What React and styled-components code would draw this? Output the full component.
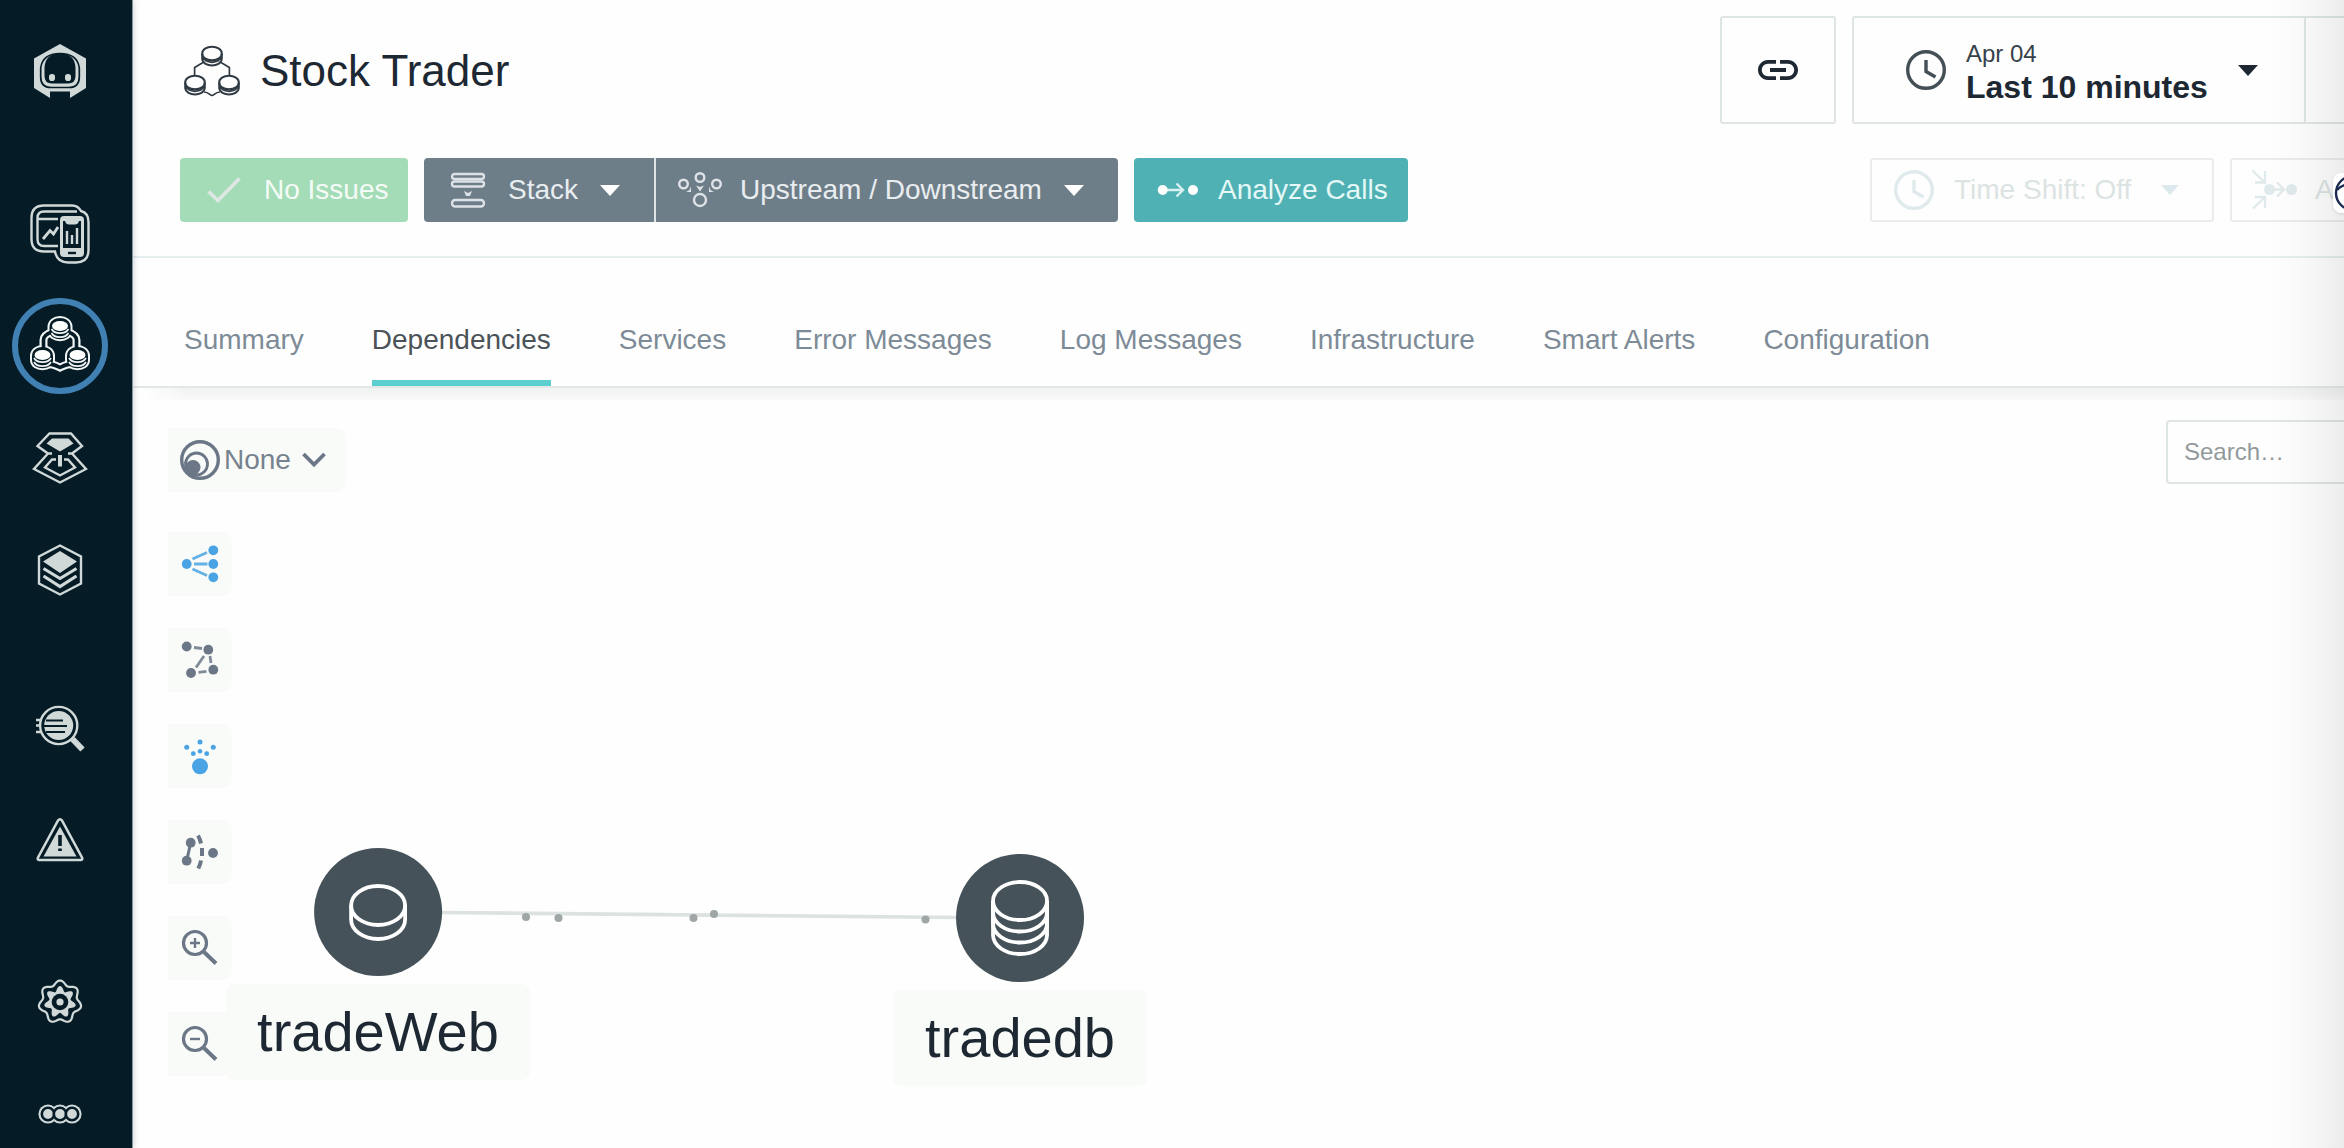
import React from 'react';
import styled, { createGlobalStyle } from 'styled-components';

const Global = createGlobalStyle`
  *, *::before, *::after { box-sizing: border-box; }
  html, body { margin: 0; padding: 0; overflow: hidden; }
  body { font-family: "Liberation Sans", Arial, sans-serif; background: #fefefe; }
  svg { display: block; flex-shrink: 0; overflow: visible; }
`;

const INK = '#1d2833';
const LIGHT = '#d0d8d8';
const NAVY = '#051c27';
const SLATE = '#6b7787';
const BLUE = '#4aa3e3';

const Shell = styled.div`
  position: relative;
  display: flex;
  width: 2344px;
  height: 1148px;
  overflow: hidden;
`;

const Sidebar = styled.nav`
  flex: none;
  width: 133px;
  display: flex;
  flex-direction: column;
  background: ${NAVY};
  border-right: 1px solid #87949a;
  box-shadow: 1px 0 6px rgba(40, 60, 80, 0.2);
  z-index: 2;
`;

const LogoSlot = styled.div`
  width: 120px;
  height: 178px;
  padding-top: 31px;
  display: flex;
  justify-content: center;
  align-items: flex-start;
  flex: none;
`;

const NavGroup = styled.div`
  margin-bottom: 48px;
  flex: none;
`;

const NavItem = styled.div`
  width: 120px;
  height: 112px;
  display: flex;
  align-items: center;
  justify-content: center;
`;

const NavRing = styled.div`
  width: 96px;
  height: 96px;
  flex: none;
  display: flex;
  align-items: center;
  justify-content: center;
  border-radius: 50%;
  border: 6px solid ${(p) => (p.$active ? '#4080b2' : 'transparent')};
`;

const Main = styled.main`
  flex: 1;
  min-width: 0;
  display: flex;
  flex-direction: column;
`;

const Header = styled.header`
  flex: none;
  height: 258px;
  border-bottom: 2px solid #e5edef;
  padding: 16px 0 0 47px;
`;

const TitleRow = styled.div`
  display: flex;
  justify-content: space-between;
  height: 108px;
`;

const TitleBlock = styled.div`
  display: flex;
  align-items: center;
  padding: 2px 0 0 4px;
`;

const Title = styled.h1`
  margin: 0 0 0 20px;
  font-size: 44px;
  font-weight: 400;
  line-height: 52px;
  color: ${INK};
`;

const TimeControls = styled.div`
  width: 624px;
  display: flex;
  gap: 16px;
  overflow: hidden;
`;

const LinkButton = styled.div`
  flex: none;
  width: 116px;
  border: 2px solid #dfe5e5;
  border-radius: 3px;
  display: flex;
  align-items: center;
  justify-content: center;
`;

const TimePicker = styled.div`
  flex: none;
  width: 600px;
  display: flex;
  border: 2px solid #dfe5e5;
  border-radius: 3px;
`;

const TimeValue = styled.div`
  width: 452px;
  border-right: 2px solid #dfe5e5;
  display: flex;
  align-items: center;
  padding-left: 52px;
`;

const TimeText = styled.div`
  margin-left: 20px;
  padding-top: 2px;
  width: 272px;
  color: ${INK};
`;

const TimeDate = styled.div`
  font-size: 24px;
  line-height: 32px;
  color: #37424b;
`;

const TimeRange = styled.div`
  font-size: 32px;
  line-height: 34px;
  font-weight: 700;
  white-space: nowrap;
`;

const Actions = styled.div`
  display: flex;
  margin-top: 34px;
  height: 64px;
`;

const tones = {
  ok: ['#a4dcb7', '#f4fbf6'],
  slate: ['#6e7e88', '#e9edf0'],
  teal: ['#50b1b5', '#e4f8f7'],
};

const Action = styled.div`
  flex: none;
  width: ${(p) => p.$w}px;
  margin-right: ${(p) => (p.$joined ? 0 : 16)}px;
  padding-left: ${(p) => p.$pad}px;
  border-right: ${(p) => (p.$joined ? '2px solid #dfe4e7' : 'none')};
  border-radius: ${(p) => p.$radius || '4px'};
  background: ${(p) => tones[p.$tone][0]};
  color: ${(p) => tones[p.$tone][1]};
  display: flex;
  align-items: center;
  font-size: 28px;
  white-space: nowrap;
`;

const ActionText = styled.span`
  margin-left: ${(p) => p.$gap}px;
  margin-right: 22px;
`;

const GhostActions = styled.div`
  margin-left: auto;
  width: 474px;
  display: flex;
  gap: 16px;
  overflow: hidden;
`;

const GhostAction = styled.div`
  flex: none;
  width: ${(p) => p.$w}px;
  padding-left: ${(p) => p.$pad}px;
  border: 2px solid #ececec;
  border-radius: 3px;
  color: #dbe3e3;
  display: flex;
  align-items: center;
  font-size: 28px;
  white-space: nowrap;
`;

const GhostText = styled.span`
  margin-left: ${(p) => p.$gap}px;
  margin-right: 30px;
`;

const TabBar = styled.div`
  flex: none;
  position: relative;
  height: 130px;
  border-bottom: 2px solid #e2e8e8;
  padding-left: 51px;
  display: flex;
  gap: 68px;
`;

const TabShade = styled.div`
  flex: none;
  height: 12px;
  background: linear-gradient(to bottom, #f0f1f1, #f8f9f8);
  mask-image: linear-gradient(to right, transparent 14px, #000 54px);
`;

const Tab = styled.div`
  padding-top: 66px;
  height: 128px;
  border-bottom: 6px solid ${(p) => (p.$active ? '#5bcfcf' : 'transparent')};
  color: ${(p) => (p.$active ? '#4b5358' : '#7d8b97')};
  font-size: 28px;
  line-height: 32px;
  white-space: nowrap;
`;

const Canvas = styled.section`
  flex: 1;
  display: flex;
  justify-content: space-between;
  align-items: flex-start;
  padding: 20px 0 0 35px;
`;

const Tools = styled.div`
  padding-top: 8px;
  display: flex;
  flex-direction: column;
  align-items: flex-start;
  gap: 32px;
`;

const Picker = styled.div`
  width: 178px;
  height: 64px;
  margin-bottom: 8px;
  padding-left: 12px;
  background: #f9fbf8;
  border-radius: 0 10px 10px 0;
  display: flex;
  align-items: center;
  font-size: 28px;
  color: #76828d;
`;

const PickerText = styled.span`
  margin: 0 11px 0 4px;
`;

const Tool = styled.div`
  width: 64px;
  height: 64px;
  background: #f9fbf8;
  border-radius: 0 10px 10px 0;
`;

const Search = styled.div`
  width: 178px;
  height: 64px;
  padding-left: 16px;
  border: 2px solid #dfe5e5;
  border-right: none;
  border-radius: 4px 0 0 4px;
  font-size: 24px;
  line-height: 59px;
  color: #929a9c;
`;

const Edges = styled.svg`
  position: absolute;
  left: 0;
  top: 0;
`;

const Node = styled.div`
  position: absolute;
  left: ${(p) => p.$x}px;
  top: ${(p) => p.$y}px;
  transform: translateX(-50%);
  display: flex;
  flex-direction: column;
  align-items: center;
  gap: 8px;
`;

const NodeDisc = styled.div`
  width: 128px;
  height: 128px;
  border-radius: 50%;
  background: #46525a;
  display: flex;
  align-items: center;
  justify-content: center;
`;

const NodeLabel = styled.div`
  height: 96px;
  padding: 0 ${(p) => p.$pad}px;
  border-radius: 8px;
  background: #f9fbf8;
  color: ${INK};
  font-size: 56px;
  line-height: 96px;
  white-space: nowrap;
`;

const EdgeFade = styled.div`
  position: absolute;
  right: 0;
  top: 0;
  width: 76px;
  height: 100%;
  background: linear-gradient(to right, rgba(0, 0, 0, 0), rgba(0, 0, 0, 0.02) 45%, rgba(0, 0, 0, 0.07));
`;

const Badge = styled.div`
  position: absolute;
  left: 2333px;
  top: 173px;
  width: 40px;
  height: 40px;
  border-radius: 8px;
  background: #fff;
  box-shadow: 0 1px 3px rgba(0, 0, 0, 0.12);
`;

const NavSvg = ({ children }) => (
  <svg width="80" height="80" viewBox="-40 -40 80 80" fill="none" stroke={LIGHT} strokeWidth="2.4">
    {children}
  </svg>
);

const LogoIcon = () => (
  <NavSvg>
    <path stroke="none" fill={LIGHT} d="M0-27 26-12.500V17L10 27V20.500H-10V27L-26 17V-12.500Z" />
    <path stroke={NAVY} strokeWidth="1.700" d="M-19.300-3C-18-13-12-17.500 0-17.500 12-17.500 18-13 19.300-3V6Q19.300 16.500 9 16.500H-9Q-19.300 16.500-19.300 6Z" />
    <path stroke="none" fill={NAVY} d="M-15.500-4C-14.500-13-10-17.500 0-17.500 10-17.500 14.500-13 15.500-4V5Q15.500 12.500 8 12.500H-8Q-15.500 12.500-15.500 5Z" />
    <rect stroke="none" fill={LIGHT} x="-11" y="3" width="6" height="7" rx="2.800" />
    <rect stroke="none" fill={LIGHT} x="5" y="3" width="6" height="7" rx="2.800" />
  </NavSvg>
);

const WebsiteIcon = () => (
  <NavSvg>
    <path d="M-16-28.500H12Q18-28.500 21-23 28.500-21 28.500-12V16Q28.500 28.500 16 28.500H8Q-3 28.500-5 17.500H-16Q-28.500 17.500-28.500 5V-16Q-28.500-28.500-16-28.500Z" />
    <path d="M17-22.500H-16Q-22.500-22.500-22.500-16V5Q-22.500 12-16 12H-2M-22-15H-2" />
    <path strokeWidth="2.800" d="M-17 5-10-3.500-6.500 0-2-7" />
    <rect stroke="none" fill={LIGHT} x="0" y="-18" width="24" height="41" rx="4" />
    <path stroke="none" fill={NAVY} d="M3-13H5Q6-9.500 9-9.500H15Q18-9.500 19-13H21V14H3Z" />
    <path d="M7-3V10M12 1V10M17-6V10" />
    <path stroke={NAVY} d="M8 19H16" />
  </NavSvg>
);

const stackLink = 'M-8-14C-14-12-16.500-10-16.500-6V7M8-14C14-12 16.500-10 16.500-6V7M-15 18C-8 18-6 18.500 0 21.500 6 18.500 8 18 15 18';
const outlineCylinder = (x, y) =>
  `M${x - 10.5} ${y + 1}C${x - 10.5} ${y - 11} ${x + 10.5} ${y - 11} ${x + 10.5} ${y + 1}V${y + 5}C${x + 10.5} ${y + 16} ${x - 10.5} ${y + 16} ${x - 10.5} ${y + 5}Z`;

const AppsIcon = () => (
  <NavSvg>
    <g stroke="#f2f5f5" strokeWidth="2.200">
      <path strokeWidth="8" d={stackLink} />
      {[[0, -20], [-17.500, 9], [17.500, 9]].map(([x, y]) => (
        <path key={x} strokeWidth="4" d={outlineCylinder(x, y)} />
      ))}
      <path stroke={NAVY} strokeWidth="3.600" d={stackLink} />
      {[[0, -20], [-17.500, 9], [17.500, 9]].map(([x, y]) => (
        <g key={x}>
          <path fill={NAVY} stroke="none" d={outlineCylinder(x, y)} />
          <ellipse cx={x} cy={y} rx="8" ry="5" fill="#fff" stroke="none" />
          <path strokeWidth="1.600" d={`M${x - 8.5} ${y + 3}c3 5.500 14 5.500 17 0M${x - 8.5} ${y + 7}c3 5.500 14 5.500 17 0`} />
        </g>
      ))}
    </g>
  </NavSvg>
);

const PlatformIcon = () => (
  <NavSvg>
    <path d="M-8-4.500H-12L-22.500-12-10.500-24.500H11L22-12 12-4.500H8M-12-4.500-26 11 0 24.500 26 11 12-4.500" />
    <path stroke="none" fill={LIGHT} d="M-8-19.500H8.500L13.500-14.500 0-6.500-13.500-14.500Z" />
    <path strokeWidth="4" d="M0-3V8.500" />
    <path d="M-4 1.500H-8L-15 9.500 0 17.500 15 9.500 8 1.500H4" />
  </NavSvg>
);

const LayersIcon = () => (
  <NavSvg>
    <path d="M0-24.500 21-13.500V13.500L0 24.500-21 13.500V-13.500Z" />
    <path stroke="none" fill={LIGHT} d="M0-19 17-8.500 0 3-17-8.500Z" />
    <path strokeWidth="3.200" d="M-16.500-1.500 0 8.500 16.500-1.500M-16.500 6 0 16.500 16.500 6" />
  </NavSvg>
);

const AnalyzeIcon = () => (
  <NavSvg>
    <circle cx="-1.300" cy="-4.500" r="18.600" />
    <circle cx="-1.300" cy="-4.500" r="14.500" fill={LIGHT} stroke="none" />
    <path stroke={NAVY} strokeWidth="2.200" d="M-14-9.500H3M-16-4H7M-14 2H5" />
    <path strokeWidth="2.600" d="M-24-10H-19M-24-4.500H-20M-24 2H-19" />
    <path strokeWidth="6" d="M12.500 9 22.500 19.500" />
  </NavSvg>
);

const WarningIcon = () => (
  <NavSvg>
    <path strokeWidth="2.600" strokeLinejoin="round" d="M-2-21.500Q0-24 2-21.500L22 15.500Q23 18 20.500 18H-20.500Q-23 18-22 15.500Z" />
    <path stroke="none" fill={LIGHT} d="M0-15.500 16.500 14.500H-16.500Z" />
    <path stroke={NAVY} strokeWidth="3.600" d="M0-7V4M0 6.500V9" />
  </NavSvg>
);

const lobes = (r, a) =>
  Array.from({ length: 140 }, (_, i) => {
    const t = (i / 140) * Math.PI * 2;
    const q = r + a * Math.cos(7 * t);
    return `${i ? 'L' : 'M'}${(q * Math.sin(t)).toFixed(2)} ${(-q * Math.cos(t)).toFixed(2)}`;
  }).join('') + 'Z';

const GearIcon = () => (
  <NavSvg>
    <path strokeWidth="2.200" d={lobes(19.4, 2.1)} />
    <path stroke="none" fill={LIGHT} d={lobes(13.4, 2.6)} />
    <circle r="8.300" fill={NAVY} stroke="none" />
    <circle r="3.600" fill={LIGHT} stroke="none" />
  </NavSvg>
);

const MoreIcon = () => (
  <NavSvg>
    {[-12, 0, 12].map((x) => (
      <circle key={x} cx={x} r="9.600" fill={LIGHT} stroke="none" />
    ))}
    {[-12, 0, 12].map((x) => (
      <circle key={x} cx={x} r="6.200" fill={LIGHT} stroke={NAVY} strokeWidth="2.600" />
    ))}
  </NavSvg>
);

const AppIcon = () => (
  <svg width="56" height="52" viewBox="184 44 56 52" fill="none" stroke="#303b44" strokeWidth="2">
    {[[212, 52.5], [195, 81.5], [229, 81.5]].map(([x, y]) => (
      <g key={x}>
        <ellipse cx={x} cy={y} rx="9.800" ry="6.800" />
        <path d={`M${x - 9.8} ${y}v5.500c1 8.500 18.600 8.500 19.600 0v-5.500M${x - 9.5} ${y + 3}c3 7.500 16 7.500 19 0`} />
      </g>
    ))}
    <path strokeWidth="1.700" d="M203 61.500 194.600 66.500V74.500M221 61.500 229.400 66.500V74.500M204 91C209 91 210 94.500 212 94.500 214 94.500 215 91 220 91" />
  </svg>
);

const Caret = ({ w = 20, h = 11, color = '#fff' }) => (
  <svg width={w} height={h} viewBox="0 0 20 11">
    <path d="M0 0H20L10 11Z" fill={color} />
  </svg>
);

const CheckIcon = () => (
  <svg width="34" height="26" fill="none" stroke="#dfe7e4" strokeWidth="3.600">
    <path d="M1.500 14.500 11 23.500 32.500 1.500" />
  </svg>
);

const StackIcon = () => (
  <svg width="34" height="36" fill="none" stroke="#dde2e6" strokeWidth="2.400">
    <rect x="1" y="2" width="32" height="5" rx="2.500" />
    <rect x="1" y="9.500" width="32" height="5" rx="2.500" />
    <rect x="1" y="28" width="32" height="6.500" rx="3.200" />
    <path stroke="none" fill="#dde2e6" d="M13 19l4 2 4-2-2 5h-4z" />
  </svg>
);

const StreamIcon = () => (
  <svg width="44" height="36" fill="none" stroke="#dde2e6" strokeWidth="2.400">
    <circle cx="5.500" cy="12" r="4.300" />
    <circle cx="22" cy="5.500" r="4.300" />
    <circle cx="38.500" cy="12" r="4.300" />
    <circle cx="22" cy="28" r="6" />
    <path stroke="none" fill="#dde2e6" d="M18 13.500l4 1.500 4-1.500-4 6zM13 14.500V20H8l3.500-2zM31 14.500V20h5l-3.500-2z" />
  </svg>
);

const CallsIcon = () => (
  <svg width="40" height="18" fill="none" stroke="#d9f1f0" strokeWidth="2.400">
    <path d="M6 9H25M18.500 2.500 25 9 18.500 15.500" />
    <circle cx="4.700" cy="9" r="5" fill="#fff" stroke="none" />
    <circle cx="35" cy="9" r="5" fill="#fff" stroke="none" />
  </svg>
);

const ClockIcon = ({ color }) => (
  <svg width="40" height="40" fill="none" stroke={color} strokeWidth="3.400">
    <circle cx="20" cy="20" r="18.300" />
    <path d="M20 10V21.500L29.500 27" />
  </svg>
);

const LinkIcon = () => (
  <svg width="48" height="48" viewBox="0 0 24 24" fill={INK}>
    <path d="M3.900 12c0-1.710 1.390-3.100 3.100-3.100h4V7H7c-2.760 0-5 2.240-5 5s2.240 5 5 5h4v-1.900H7c-1.710 0-3.100-1.390-3.100-3.100zM8 13h8v-2H8v2zm9-6h-4v1.900h4c1.710 0 3.100 1.390 3.100 3.100s-1.390 3.100-3.100 3.100h-4V17h4c2.760 0 5-2.240 5-5s-2.240-5-5-5z" />
  </svg>
);

const AdjustIcon = () => (
  <svg width="46" height="40" fill="none" stroke="#e0eaed" strokeWidth="2.400">
    <path d="M.500.500 12 12M13 1V12.500H3M1 38.500 12 28M3 27H13V38" />
    <path d="M17 19.500H31M25 12.500 32 19.500 25 26.500" />
    <circle cx="17.500" cy="19.500" r="5.500" fill="#e0eaed" stroke="none" />
    <circle cx="39.500" cy="19.500" r="5.500" fill="#e0eaed" stroke="none" />
  </svg>
);

const LensIcon = () => (
  <svg width="40" height="40" fill="none" stroke={SLATE}>
    <circle cx="20" cy="20" r="18.300" strokeWidth="3.400" />
    <circle cx="16.500" cy="24" r="11" strokeWidth="2.800" />
    <circle cx="13" cy="27.500" r="7.500" fill={SLATE} stroke="none" />
  </svg>
);

const ToolSvg = ({ color, dots = [], children }) => (
  <svg width="64" height="64" fill="none" stroke={color} strokeWidth="2.800">
    {children}
    {dots.map(([x, y, r = 4.9]) => (
      <circle key={`${x}-${y}`} cx={x} cy={y} r={r} fill={color} stroke="none" />
    ))}
  </svg>
);

const Zoomer = ({ plus }) => (
  <ToolSvg color={SLATE}>
    <circle cx="27" cy="27" r="11.500" strokeWidth="3.200" />
    <path strokeWidth="4" d="M36 36 48 47.500" />
    <path strokeWidth="2.400" d={plus ? 'M22 27H32M27 22V32' : 'M22 27H32'} />
  </ToolSvg>
);

const tools = [
  <ToolSvg color={BLUE} dots={[[18.7, 32], [45.3, 18.3], [45.3, 32], [45.3, 45.3]]}>
    <path opacity=".85" d="M24.500 27 39 20.500M26 32H39.500M24.500 37 39 43.500" />
  </ToolSvg>,
  <ToolSvg color={SLATE} dots={[[18.7, 18.5], [40.3, 21.7], [45.3, 41.7], [23, 45]]}>
    <path opacity=".85" d="M26 19.500 34 20.500M36 28 28 39.500M42 28 43 35M30.500 44.300 38.500 43.300" />
  </ToolSvg>,
  <ToolSvg
    color={BLUE}
    dots={[[32, 42.3, 8], [32, 18, 2.5], [32, 27.3, 2.3], [18.7, 23.3, 2.5], [45.3, 23.3, 2.5], [25.3, 29.7, 2.4], [38.7, 29.7, 2.4]]}
  />,
  <ToolSvg color={SLATE} dots={[[22.7, 22.7], [18.7, 40.7], [45, 33]]}>
    <path strokeWidth="3" d="M22.700 22.700 18.700 40.700" />
    <path strokeWidth="4" d="M30 15.500C32 19 32.500 21 33 23.500M34 28V36M33 40.500C32.500 43.500 31.500 46 30.300 48.500" />
  </ToolSvg>,
  <Zoomer plus />,
  <Zoomer />,
];

const CylinderIcon = ({ cy, ry, steps }) => (
  <svg width="80" height="80" viewBox="-40 -40 80 80" fill="none" stroke="#fff" strokeWidth="3.800">
    <ellipse cx="0" cy={cy} rx="27" ry={ry} />
    {steps.map((s) => (
      <path key={s} d={`M-27 ${cy}v${s}a27 ${ry} 0 0 0 54 0v-${s}`} />
    ))}
  </svg>
);

const navGroups = [
  [WebsiteIcon, AppsIcon, PlatformIcon, LayersIcon],
  [AnalyzeIcon, WarningIcon],
  [GearIcon, MoreIcon],
];

const tabs = [
  'Summary', 'Dependencies', 'Services', 'Error Messages',
  'Log Messages', 'Infrastructure', 'Smart Alerts', 'Configuration',
];

const calls = [[526, 917], [558.5, 918], [693.5, 918], [714, 914], [925.5, 919.5]];

export default function App() {
  return (
    <>
      <Global />
      <Shell>
        <Sidebar>
          <LogoSlot><LogoIcon /></LogoSlot>
          {navGroups.map((group, g) => (
            <NavGroup key={g}>
              {group.map((Icon, i) => (
                <NavItem key={i}>
                  <NavRing $active={Icon === AppsIcon}><Icon /></NavRing>
                </NavItem>
              ))}
            </NavGroup>
          ))}
        </Sidebar>
        <Main>
          <Header>
            <TitleRow>
              <TitleBlock>
                <AppIcon />
                <Title>Stock Trader</Title>
              </TitleBlock>
              <TimeControls>
                <LinkButton><LinkIcon /></LinkButton>
                <TimePicker>
                  <TimeValue>
                    <ClockIcon color="#454f56" />
                    <TimeText>
                      <TimeDate>Apr 04</TimeDate>
                      <TimeRange>Last 10 minutes</TimeRange>
                    </TimeText>
                    <Caret color={INK} />
                  </TimeValue>
                </TimePicker>
              </TimeControls>
            </TitleRow>
            <Actions>
              <Action $tone="ok" $w={228} $pad={27}>
                <CheckIcon />
                <ActionText $gap={23}>No Issues</ActionText>
              </Action>
              <Action $tone="slate" $w={232} $pad={27} $joined $radius="4px 0 0 4px">
                <StackIcon />
                <ActionText $gap={23}>Stack</ActionText>
                <Caret />
              </Action>
              <Action $tone="slate" $w={462} $pad={22} $radius="0 4px 4px 0">
                <StreamIcon />
                <ActionText $gap={18}>Upstream / Downstream</ActionText>
                <Caret />
              </Action>
              <Action $tone="teal" $w={274} $pad={24}>
                <CallsIcon />
                <ActionText $gap={20}>Analyze Calls</ActionText>
              </Action>
              <GhostActions>
                <GhostAction $w={344} $pad={22}>
                  <ClockIcon color="#e0eaed" />
                  <GhostText $gap={20}>Time Shift: Off</GhostText>
                  <Caret color="#dbe8ec" w={18} h={10} />
                </GhostAction>
                <GhostAction $w={300} $pad={20}>
                  <AdjustIcon />
                  <GhostText $gap={17}>A</GhostText>
                </GhostAction>
              </GhostActions>
            </Actions>
          </Header>
          <TabBar>
            {tabs.map((t) => (
              <Tab key={t} $active={t === 'Dependencies'}>{t}</Tab>
            ))}
          </TabBar>
          <TabShade />
          <Canvas>
            <Tools>
              <Picker>
                <LensIcon />
                <PickerText>None</PickerText>
                <svg width="24" height="16" fill="none" stroke={SLATE} strokeWidth="3.800">
                  <path d="M1.500 2 12 12.500 22.500 2" />
                </svg>
              </Picker>
              {tools.map((icon, i) => (
                <Tool key={i}>{icon}</Tool>
              ))}
            </Tools>
            <Search>Search…</Search>
          </Canvas>
        </Main>
        <Edges width="1200" height="1148">
          <path d="M440 912.500 960 917.500" stroke="#dce2e1" strokeWidth="3.600" />
          {calls.map(([x, y]) => (
            <circle key={x} cx={x} cy={y} r="4" fill="#9ea6a6" />
          ))}
        </Edges>
        <Node $x={378} $y={848}>
          <NodeDisc><CylinderIcon cy={-6.5} ry={19.5} steps={[14]} /></NodeDisc>
          <NodeLabel $pad={31}>tradeWeb</NodeLabel>
        </Node>
        <Node $x={1020} $y={854}>
          <NodeDisc><CylinderIcon cy={-17} ry={19} steps={[11.5, 22.5, 34]} /></NodeDisc>
          <NodeLabel $pad={32}>tradedb</NodeLabel>
        </Node>
        <EdgeFade />
        <Badge>
          <svg width="40" height="40" fill="none" stroke="#1b2a52" strokeWidth="2.400">
            <circle cx="20" cy="20" r="17" />
            <path d="M4 17Q7 13.500 12 12" />
          </svg>
        </Badge>
      </Shell>
    </>
  );
}
